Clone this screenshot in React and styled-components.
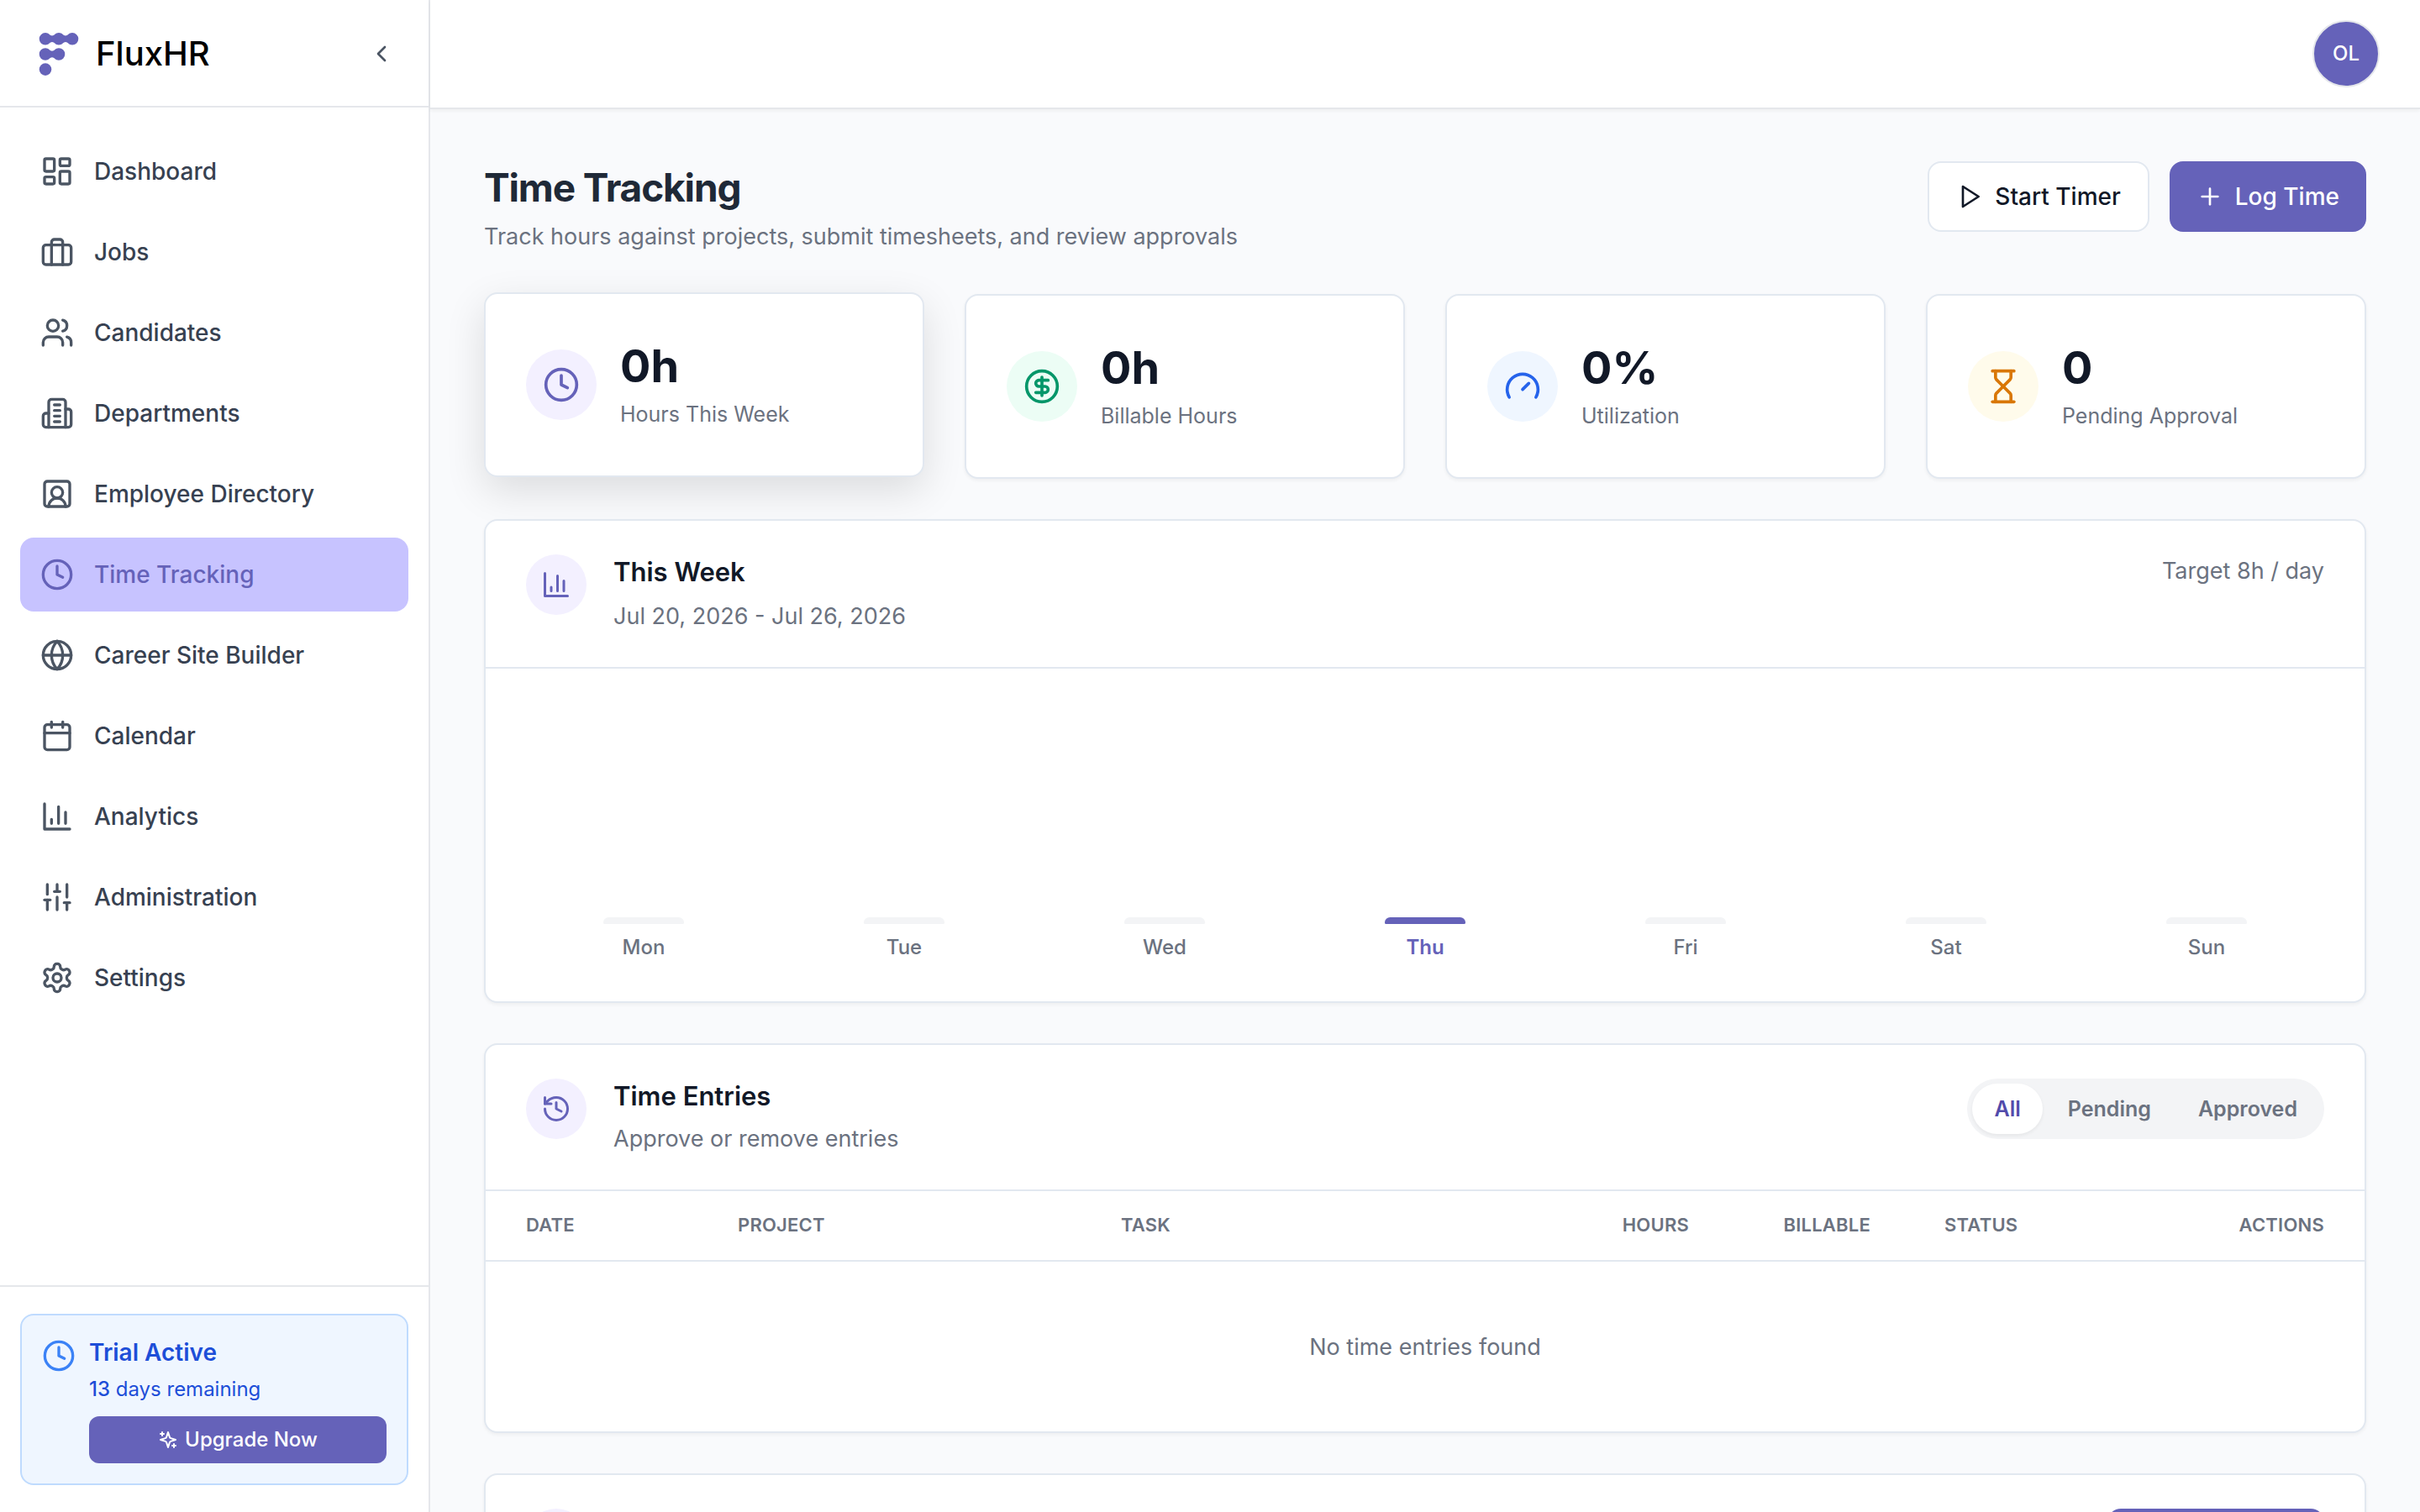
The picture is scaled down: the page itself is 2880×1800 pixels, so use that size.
import React, { useState } from "react";
import styled, { createGlobalStyle, css } from "styled-components";
import {
  Calendar,
  ChevronLeft,
  CircleDollarSign,
  Clock,
  Gauge,
  Globe,
  History,
  Hourglass,
  LayoutDashboard,
  Plus,
  SlidersVertical,
  SquareUserRound,
} from "lucide-react";

const color = {
  brand: "#6562b9",
  brandSoft: "#c7c3ff",
  brandTint: "#f3f0ff",
  brandText: "#524bab",
  page: "#f9fafc",
  line: "#e2e8f0",
  chromeLine: "#e5e7eb",
  ink: "#111827",
  title: "#1f2937",
  nav: "#374151",
  navIcon: "#4b5563",
  muted: "#6b7280",
  track: "#f3f4f6",
};

const GlobalStyle = createGlobalStyle`
  *, *::before, *::after { box-sizing: border-box; }
  body {
    margin: 0;
    background: ${color.page};
    color: ${color.ink};
    font-family: Inter, "Noto Sans", sans-serif;
    font-size: 27px;
    line-height: 40px;
    -webkit-font-smoothing: antialiased;
  }
  button { font: inherit; color: inherit; cursor: pointer; }
  h1, h2, p { margin: 0; }
`;

/* ---------- icons ---------- */

function Stroke({ size = 24, children }) {
  return (
    <svg
      width={size}
      height={size}
      viewBox="0 0 24 24"
      fill="none"
      stroke="currentColor"
      strokeWidth="2"
      strokeLinecap="round"
      strokeLinejoin="round"
      aria-hidden="true"
    >
      {children}
    </svg>
  );
}

const Briefcase = ({ size }) => (
  <Stroke size={size}>
    <rect x="2" y="7" width="20" height="14" rx="2" />
    <path d="M16 21V5a2 2 0 0 0-2-2h-4a2 2 0 0 0-2 2v16" />
  </Stroke>
);

const Users = ({ size }) => (
  <Stroke size={size}>
    <path d="M16 21v-2a4 4 0 0 0-4-4H6a4 4 0 0 0-4 4v2" />
    <circle cx="9" cy="7" r="4" />
    <path d="M22 21v-2a4 4 0 0 0-3-3.87" />
    <path d="M16 3.13a4 4 0 0 1 0 7.75" />
  </Stroke>
);

const Building = ({ size }) => (
  <Stroke size={size}>
    <path d="M6 22V4a2 2 0 0 1 2-2h8a2 2 0 0 1 2 2v18Z" />
    <path d="M6 12H4a2 2 0 0 0-2 2v6a2 2 0 0 0 2 2h2" />
    <path d="M18 9h2a2 2 0 0 1 2 2v9a2 2 0 0 1-2 2h-2" />
    <path d="M10 6h4M10 10h4M10 14h4M10 18h4" />
  </Stroke>
);

const BarChart = ({ size }) => (
  <Stroke size={size}>
    <path d="M3 3v18h18" />
    <path d="M18 17V9M13 17V5M8 17v-3" />
  </Stroke>
);

const Gear = ({ size }) => (
  <Stroke size={size}>
    <path d="M12.22 2h-.44a2 2 0 0 0-2 2v.18a2 2 0 0 1-1 1.73l-.43.25a2 2 0 0 1-2 0l-.15-.08a2 2 0 0 0-2.73.73l-.22.38a2 2 0 0 0 .73 2.73l.15.1a2 2 0 0 1 1 1.72v.51a2 2 0 0 1-1 1.74l-.15.09a2 2 0 0 0-.73 2.73l.22.38a2 2 0 0 0 2.73.73l.15-.08a2 2 0 0 1 2 0l.43.25a2 2 0 0 1 1 1.73V20a2 2 0 0 0 2 2h.44a2 2 0 0 0 2-2v-.18a2 2 0 0 1 1-1.73l.43-.25a2 2 0 0 1 2 0l.15.08a2 2 0 0 0 2.73-.73l.22-.39a2 2 0 0 0-.73-2.73l-.15-.08a2 2 0 0 1-1-1.74v-.5a2 2 0 0 1 1-1.74l.15-.09a2 2 0 0 0 .73-2.73l-.22-.38a2 2 0 0 0-2.73-.73l-.15.08a2 2 0 0 1-2 0l-.43-.25a2 2 0 0 1-1-1.73V4a2 2 0 0 0-2-2z" />
    <circle cx="12" cy="12" r="3" />
  </Stroke>
);

const Play = ({ size }) => (
  <Stroke size={size}>
    <path d="M6 3l14 9-14 9z" />
  </Stroke>
);

const Sparkles = ({ size }) => (
  <Stroke size={size}>
    <path d="m12 3-1.912 5.813a2 2 0 0 1-1.275 1.275L3 12l5.813 1.912a2 2 0 0 1 1.275 1.275L12 21l1.912-5.813a2 2 0 0 1 1.275-1.275L21 12l-5.813-1.912a2 2 0 0 1-1.275-1.275L12 3Z" />
    <path d="M5 3v4M19 17v4M3 5h4M17 19h4" />
  </Stroke>
);

const LogoMark = () => (
  <svg width="48" height="52" viewBox="0 0 48 52" fill={color.brand} aria-hidden="true">
    <path d="M8 1C12 1 13.500 4.500 16 4.500S20 1 24 1s5.500 3.500 8 3.500S36 1 40 1a7.300 7.300 0 0 1 0 14.600c-4 0-5.500-3.500-8-3.500s-4 3.500-8 3.500-5.500-3.500-8-3.500-4 3.500-8 3.500A7.300 7.300 0 0 1 8 1Z" />
    <path d="M8 19.200c4 0 5.500 3.500 8 3.500s4-3.500 8-3.500a7.300 7.300 0 0 1 0 14.600c-4 0-5.500-3.500-8-3.500s-4 3.500-8 3.500a7.300 7.300 0 0 1 0-14.600Z" />
    <circle cx="8" cy="44.600" r="7.300" />
  </svg>
);

/* ---------- shell ---------- */

const Shell = styled.div`
  display: flex;
  height: 100vh;
  overflow: hidden;
`;

const Sidebar = styled.aside`
  display: flex;
  flex-direction: column;
  flex: 0 0 512px;
  background: #fff;
  border-right: 2px solid ${color.chromeLine};
`;

const Brand = styled.div`
  display: flex;
  align-items: center;
  justify-content: space-between;
  height: 128px;
  padding: 2px 24px 0 46px;
  border-bottom: 2px solid ${color.chromeLine};
`;

const Logo = styled.a`
  display: flex;
  align-items: center;
  gap: 20px;
  color: #000;
  font-size: 40px;
  font-weight: 500;
  line-height: 48px;
  text-decoration: none;
`;

const CollapseButton = styled.button`
  display: flex;
  padding: 16px;
  border: 0;
  border-radius: 12px;
  background: none;
  color: ${color.navIcon};
`;

const Nav = styled.nav`
  display: flex;
  flex: 1;
  flex-direction: column;
  gap: 8px;
  padding: 32px 24px;
`;

const NavLink = styled.a`
  display: flex;
  align-items: center;
  gap: 24px;
  height: 88px;
  padding: 0 24px;
  border-radius: 16px;
  background: ${(p) => (p.$active ? color.brandSoft : "transparent")};
  color: ${(p) => (p.$active ? color.brand : color.nav)};
  font-size: 28px;
  font-weight: 500;
  text-decoration: none;

  svg {
    color: ${(p) => (p.$active ? color.brand : color.navIcon)};
  }
`;

const SidebarFooter = styled.div`
  padding: 32px 24px;
  border-top: 2px solid ${color.chromeLine};
`;

const TrialCard = styled.div`
  display: flex;
  gap: 16px;
  padding: 24px;
  border: 2px solid #bfdbfe;
  border-radius: 16px;
  background: #eff6ff;
  color: #3b82f6;

  > svg {
    flex: none;
    margin-top: 4px;
  }
`;

const TrialBody = styled.div`
  display: flex;
  flex: 1;
  flex-direction: column;
  color: #1d4ed8;
`;

const TrialTitle = styled.p`
  font-size: 28px;
  font-weight: 600;
`;

const TrialText = styled.p`
  margin-top: 8px;
  font-size: 24px;
  line-height: 32px;

  strong {
    font-weight: 500;
  }
`;

const UpgradeButton = styled.button`
  display: flex;
  align-items: center;
  justify-content: center;
  gap: 8px;
  height: 56px;
  margin-top: 16px;
  border: 0;
  border-radius: 12px;
  background: ${color.brand};
  color: #fff;
  font-size: 24px;
  font-weight: 500;
  line-height: 32px;
`;

const Main = styled.div`
  display: flex;
  flex: 1;
  flex-direction: column;
  min-width: 0;
`;

const TopBar = styled.header`
  display: flex;
  flex: none;
  align-items: center;
  justify-content: flex-end;
  height: 130px;
  padding: 0 48px;
  background: #fff;
  border-bottom: 2px solid ${color.chromeLine};
  box-shadow: 0 2px 4px rgba(0, 0, 0, 0.05);
`;

const Avatar = styled.button`
  width: 80px;
  height: 80px;
  padding: 0;
  border: 2px solid ${color.chromeLine};
  border-radius: 50%;
  background: ${color.brand};
  color: #fff;
  font-size: 24px;
  font-weight: 500;
`;

const Content = styled.main`
  display: flex;
  flex: 1;
  flex-direction: column;
  gap: 48px;
  min-height: 0;
  padding: 62px 64px 0;
  overflow: hidden;

  > * {
    flex: none;
  }
`;

/* ---------- page header ---------- */

const PageHeader = styled.div`
  display: flex;
  align-items: flex-start;
  justify-content: space-between;
`;

const PageTitle = styled.h1`
  color: ${color.title};
  font-size: 46px;
  font-weight: 700;
  letter-spacing: -0.025em;
  line-height: 62px;
`;

const PageSubtitle = styled.p`
  margin-top: 8px;
  color: ${color.muted};
`;

const Actions = styled.div`
  display: flex;
  gap: 24px;
`;

const Button = styled.button`
  display: flex;
  align-items: center;
  gap: 14px;
  height: 84px;
  padding: 0 32px;
  border: 2px solid ${color.line};
  border-radius: 16px;
  background: #fff;
  color: ${color.ink};
  font-size: 28px;
  font-weight: 500;

  ${(p) =>
    p.$primary &&
    css`
      border: 0;
      background: ${color.brand};
      color: #fff;
    `}
`;

const AddButton = styled(Button)`
  width: 258px;
  justify-content: center;
`;

/* ---------- stats ---------- */

const Stats = styled.div`
  display: grid;
  grid-template-columns: repeat(4, 1fr);
  gap: 48px;
`;

const StatCard = styled.div`
  display: flex;
  align-items: center;
  gap: 28px;
  height: 220px;
  padding: 0 48px;
  border: 2px solid ${color.line};
  border-radius: 16px;
  background: #fff;
  box-shadow: 0 2px 4px rgba(0, 0, 0, 0.05);

  ${(p) =>
    p.$raised &&
    css`
      transform: translateY(-2px);
      box-shadow: 0 16px 48px rgba(0, 0, 0, 0.12);
    `}
`;

const Bubble = styled.span`
  display: flex;
  flex: none;
  align-items: center;
  justify-content: center;
  width: ${(p) => p.$size}px;
  height: ${(p) => p.$size}px;
  border-radius: 50%;
  background: ${(p) => p.$bg || color.brandTint};
  color: ${(p) => p.$fg || color.brand};
`;

const StatValue = styled.p`
  font-size: 54px;
  font-weight: 700;
  line-height: 62px;
`;

const StatLabel = styled.p`
  margin-top: 8px;
  color: ${color.muted};
  font-size: 25px;
  line-height: 36px;
`;

/* ---------- panels ---------- */

const Panel = styled.section`
  position: relative;
  border: 2px solid ${color.line};
  border-radius: 16px;
  background: #fff;
  box-shadow: 0 2px 4px rgba(0, 0, 0, 0.05);
`;

const PanelHeader = styled.div`
  display: flex;
  align-items: flex-start;
  gap: 32px;
  padding: 40px 48px;
  border-bottom: 2px solid ${color.line};
`;

const PanelHeading = styled.div`
  display: flex;
  flex: 1;
  flex-direction: column;
  gap: ${(p) => p.$gap || 10}px;
  color: ${color.muted};
`;

const PanelTitle = styled.h2`
  color: ${color.ink};
  font-size: 31px;
  font-weight: 600;
  line-height: 42px;
`;

const Target = styled.p`
  color: ${color.muted};
`;

const Chart = styled.div`
  display: grid;
  grid-template-columns: repeat(7, 1fr);
  gap: 30px;
  height: 396px;
  padding: 48px;
`;

const Day = styled.div`
  display: flex;
  flex-direction: column;
  align-items: center;
  justify-content: flex-end;
  gap: 12px;
  color: ${(p) => (p.$today ? color.brand : color.muted)};
  font-size: 24px;
  font-weight: ${(p) => (p.$today ? 600 : 500)};
  line-height: 32px;
`;

const Bar = styled.span`
  width: 96px;
  min-height: 8px;
  border-radius: 8px 8px 2px 2px;
  background: ${(p) => (p.$today ? color.brand : color.track)};
`;

const Tabs = styled.div`
  display: flex;
  gap: 4px;
  padding: 6px;
  border-radius: 36px;
  background: ${color.track};
`;

const Tab = styled.button`
  height: 60px;
  padding: 0 26px;
  border: 0;
  border-radius: 30px;
  background: ${(p) => (p.$active ? "#fff" : "transparent")};
  box-shadow: ${(p) => (p.$active ? "0 2px 4px rgba(0, 0, 0, 0.06)" : "none")};
  color: ${(p) => (p.$active ? color.brandText : color.muted)};
  font-size: 25px;
  font-weight: 600;
  line-height: 36px;
`;

const Table = styled.table`
  width: 100%;
  border-collapse: separate;
  border-spacing: 0;
  table-layout: fixed;
`;

const Head = styled.th`
  width: ${(p) => (p.$width ? p.$width + "px" : "auto")};
  padding: 24px 44px 26px;
  border-bottom: 2px solid ${color.line};
  color: ${color.muted};
  font-size: 22px;
  font-weight: 600;
  letter-spacing: 0.01em;
  line-height: 32px;
  text-align: ${(p) => p.$align || "left"};
  text-transform: uppercase;

  &:first-child {
    padding-left: 48px;
  }
  &:last-child {
    padding-right: 48px;
  }
`;

const Empty = styled.td`
  padding: 82px 48px 80px;
  color: ${color.muted};
  text-align: center;
`;

/* ---------- data ---------- */

const navItems = [
  ["Dashboard", LayoutDashboard],
  ["Jobs", Briefcase],
  ["Candidates", Users],
  ["Departments", Building],
  ["Employee Directory", SquareUserRound],
  ["Time Tracking", Clock],
  ["Career Site Builder", Globe],
  ["Calendar", Calendar],
  ["Analytics", BarChart],
  ["Administration", SlidersVertical],
  ["Settings", Gear],
];

const stats = [
  { value: "0h", label: "Hours This Week", Icon: Clock, raised: true },
  { value: "0h", label: "Billable Hours", Icon: CircleDollarSign, bg: "#ecfdf5", fg: "#059669" },
  { value: "0%", label: "Utilization", Icon: Gauge, bg: "#eff6ff", fg: "#2563eb" },
  { value: "0", label: "Pending Approval", Icon: Hourglass, bg: "#fffbeb", fg: "#d97706" },
];

const days = ["Mon", "Tue", "Wed", "Thu", "Fri", "Sat", "Sun"];
const today = "Thu";

const columns = [
  { name: "Date", width: 256 },
  { name: "Project", width: 456 },
  { name: "Task" },
  { name: "Hours", width: 216, align: "right" },
  { name: "Billable", width: 216, align: "right" },
  { name: "Status", width: 256 },
  { name: "Actions", width: 288, align: "right" },
];

export default function App() {
  const [filter, setFilter] = useState("All");

  return (
    <>
      <GlobalStyle />
      <Shell>
        <Sidebar>
          <Brand>
            <Logo href="#">
              <LogoMark />
              FluxHR
            </Logo>
            <CollapseButton aria-label="Collapse sidebar">
              <ChevronLeft size={32} />
            </CollapseButton>
          </Brand>
          <Nav>
            {navItems.map(([label, Icon]) => (
              <NavLink key={label} href="#" $active={label === "Time Tracking"}>
                <Icon size={40} />
                {label}
              </NavLink>
            ))}
          </Nav>
          <SidebarFooter>
            <TrialCard>
              <Clock size={40} />
              <TrialBody>
                <TrialTitle>Trial Active</TrialTitle>
                <TrialText>
                  <strong>13</strong> days remaining
                </TrialText>
                <UpgradeButton>
                  <Sparkles size={24} />
                  Upgrade Now
                </UpgradeButton>
              </TrialBody>
            </TrialCard>
          </SidebarFooter>
        </Sidebar>

        <Main>
          <TopBar>
            <Avatar>OL</Avatar>
          </TopBar>
          <Content>
            <PageHeader>
              <div>
                <PageTitle>Time Tracking</PageTitle>
                <PageSubtitle>
                  Track hours against projects, submit timesheets, and review approvals
                </PageSubtitle>
              </div>
              <Actions>
                <Button>
                  <Play size={32} />
                  Start Timer
                </Button>
                <Button $primary>
                  <Plus size={32} />
                  Log Time
                </Button>
              </Actions>
            </PageHeader>

            <Stats>
              {stats.map(({ value, label, Icon, bg, fg, raised }) => (
                <StatCard key={label} $raised={raised}>
                  <Bubble $size={84} $bg={bg} $fg={fg}>
                    <Icon size={44} />
                  </Bubble>
                  <div>
                    <StatValue>{value}</StatValue>
                    <StatLabel>{label}</StatLabel>
                  </div>
                </StatCard>
              ))}
            </Stats>

            <Panel>
              <PanelHeader>
                <Bubble $size={72}>
                  <BarChart size={36} />
                </Bubble>
                <PanelHeading $gap={12}>
                  <PanelTitle>This Week</PanelTitle>
                  <p>Jul 20, 2026 - Jul 26, 2026</p>
                </PanelHeading>
                <Target>Target 8h / day</Target>
              </PanelHeader>
              <Chart>
                {days.map((day) => (
                  <Day key={day} $today={day === today}>
                    <Bar $today={day === today} />
                    {day}
                  </Day>
                ))}
              </Chart>
            </Panel>

            <Panel>
              <PanelHeader>
                <Bubble $size={72}>
                  <History size={36} />
                </Bubble>
                <PanelHeading>
                  <PanelTitle>Time Entries</PanelTitle>
                  <p>Approve or remove entries</p>
                </PanelHeading>
                <Tabs>
                  {["All", "Pending", "Approved"].map((name) => (
                    <Tab
                      key={name}
                      $active={filter === name}
                      aria-pressed={filter === name}
                      onClick={() => setFilter(name)}
                    >
                      {name}
                    </Tab>
                  ))}
                </Tabs>
              </PanelHeader>
              <Table>
                <thead>
                  <tr>
                    {columns.map((c) => (
                      <Head key={c.name} scope="col" $width={c.width} $align={c.align}>
                        {c.name}
                      </Head>
                    ))}
                  </tr>
                </thead>
                <tbody>
                  <tr>
                    <Empty colSpan={columns.length}>No time entries found</Empty>
                  </tr>
                </tbody>
              </Table>
            </Panel>

            <Panel>
              <PanelHeader>
                <Bubble $size={72} />
                <PanelHeading />
                <AddButton $primary aria-label="Add">
                  <Plus size={32} />
                </AddButton>
              </PanelHeader>
            </Panel>
          </Content>
        </Main>
      </Shell>
    </>
  );
}
